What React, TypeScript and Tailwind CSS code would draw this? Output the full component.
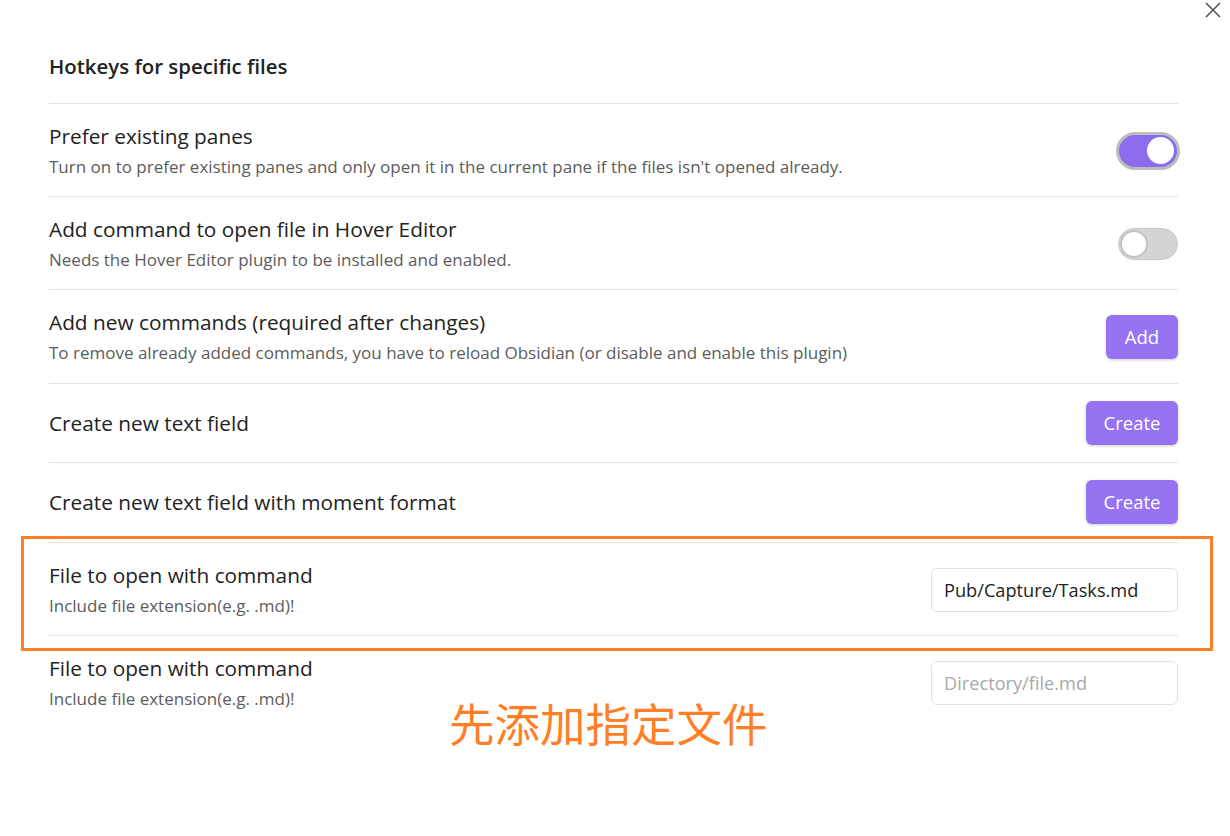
import React from "react";

const font = { fontFamily: '"Open Sans", "Noto Sans CJK SC", sans-serif' };

function Toggle({ on }: { on: boolean }) {
  if (on) {
    return (
      <div className="w-[64px] h-[38px] rounded-full border-[3px] border-[#bdbdbd] bg-[#8b6cef] flex items-center justify-end pr-[3px] shrink-0">
        <span className="w-[27px] h-[27px] rounded-full bg-white" />
      </div>
    );
  }
  return (
    <div className="w-[60px] h-[32px] rounded-full bg-[#d4d4d4] border border-[#c8c8c8] flex items-center pl-[1px] shrink-0">
      <span className="w-[28px] h-[28px] rounded-full bg-white border-2 border-[#c4c4c4]" />
    </div>
  );
}

function Btn({ label, w }: { label: string; w: string }) {
  return (
    <button
      className={`${w} h-[44px] rounded-[6px] bg-[#9673f2] text-white text-[18.5px] shadow-[0_1px_3px_rgba(0,0,0,0.2)] shrink-0`}
    >
      {label}
    </button>
  );
}

function Row({
  name,
  desc,
  control,
  pad,
  last = false,
}: {
  name: string;
  desc?: string;
  control: React.ReactNode;
  pad: string;
  last?: boolean;
}) {
  return (
    <div
      className={`flex items-center justify-between ${last ? "" : "border-b border-[#e3e3e3]"} ${pad}`}
    >
      <div className="flex flex-col">
        <div className="text-[20.8px] leading-[28px] text-[#222222]">{name}</div>
        {desc && (
          <div className="text-[17px] leading-[24px] mt-[5px] text-[#5c5c5c]">{desc}</div>
        )}
      </div>
      {control}
    </div>
  );
}

export default function App() {
  return (
    <div className="relative w-[1230px] h-[836px] bg-white overflow-hidden" style={font}>
      {/* close */}
      <svg className="absolute left-[1204px] top-[1px]" width="18" height="18" viewBox="0 0 18 18">
        <path d="M2 2 L16 16 M16 2 L2 16" stroke="#555" strokeWidth="1.6" fill="none" />
      </svg>

      <div className="ml-[49px] w-[1129px]">
        <div className="pt-[52px] pb-[23px] border-b border-[#e3e3e3] text-[20.4px] leading-[28px] font-semibold text-[#222222]">
          Hotkeys for specific files
        </div>
        <Row
          pad="pt-[18px] pb-[17px]"
          name="Prefer existing panes"
          desc="Turn on to prefer existing panes and only open it in the current pane if the files isn't opened already."
          control={<div className="mr-[-2px]"><Toggle on /></div>}
        />
        <Row
          pad="pt-[18px] pb-[17px]"
          name="Add command to open file in Hover Editor"
          desc="Needs the Hover Editor plugin to be installed and enabled."
          control={<Toggle on={false} />}
        />
        <Row
          pad="py-[18px]"
          name="Add new commands (required after changes)"
          desc="To remove already added commands, you have to reload Obsidian (or disable and enable this plugin)"
          control={<Btn label="Add" w="w-[72px]" />}
        />
        <Row pad="py-[17px]" name="Create new text field" control={<Btn label="Create" w="w-[92px]" />} />
        <Row
          pad="pt-[17px] pb-[18px]"
          name="Create new text field with moment format"
          control={<Btn label="Create" w="w-[92px]" />}
        />
        <Row
          pad="pt-[18px] pb-[17px]"
          name="File to open with command"
          desc="Include file extension(e.g. .md)!"
          control={
            <input
              readOnly
              value="Pub/Capture/Tasks.md"
              className="w-[247px] h-[44px] rounded-[6px] border border-[#e0e0e0] px-[12px] text-[18.2px] text-[#222222] outline-none"
              style={font}
            />
          }
        />
        <Row
          pad="pt-[18px] pb-[17px]"
          name="File to open with command"
          desc="Include file extension(e.g. .md)!"
          last
          control={
            <input
              readOnly
              placeholder="Directory/file.md"
              className="w-[247px] h-[44px] rounded-[6px] border border-[#e0e0e0] px-[12px] text-[18.2px] text-[#222222] placeholder:text-[#a8a8a8] outline-none"
              style={font}
            />
          }
        />
      </div>

      {/* annotation overlay */}
      <div className="absolute left-[21px] top-[536px] w-[1192px] h-[115px] border-[3px] border-[#ff7f27] pointer-events-none" />
      <div
        className="absolute left-[449px] top-[693px] text-[45.5px] leading-[58px] text-[#ff7f27]"
        style={{ fontFamily: '"Noto Sans CJK SC", sans-serif' }}
      >
        先添加指定文件
      </div>
    </div>
  );
}
